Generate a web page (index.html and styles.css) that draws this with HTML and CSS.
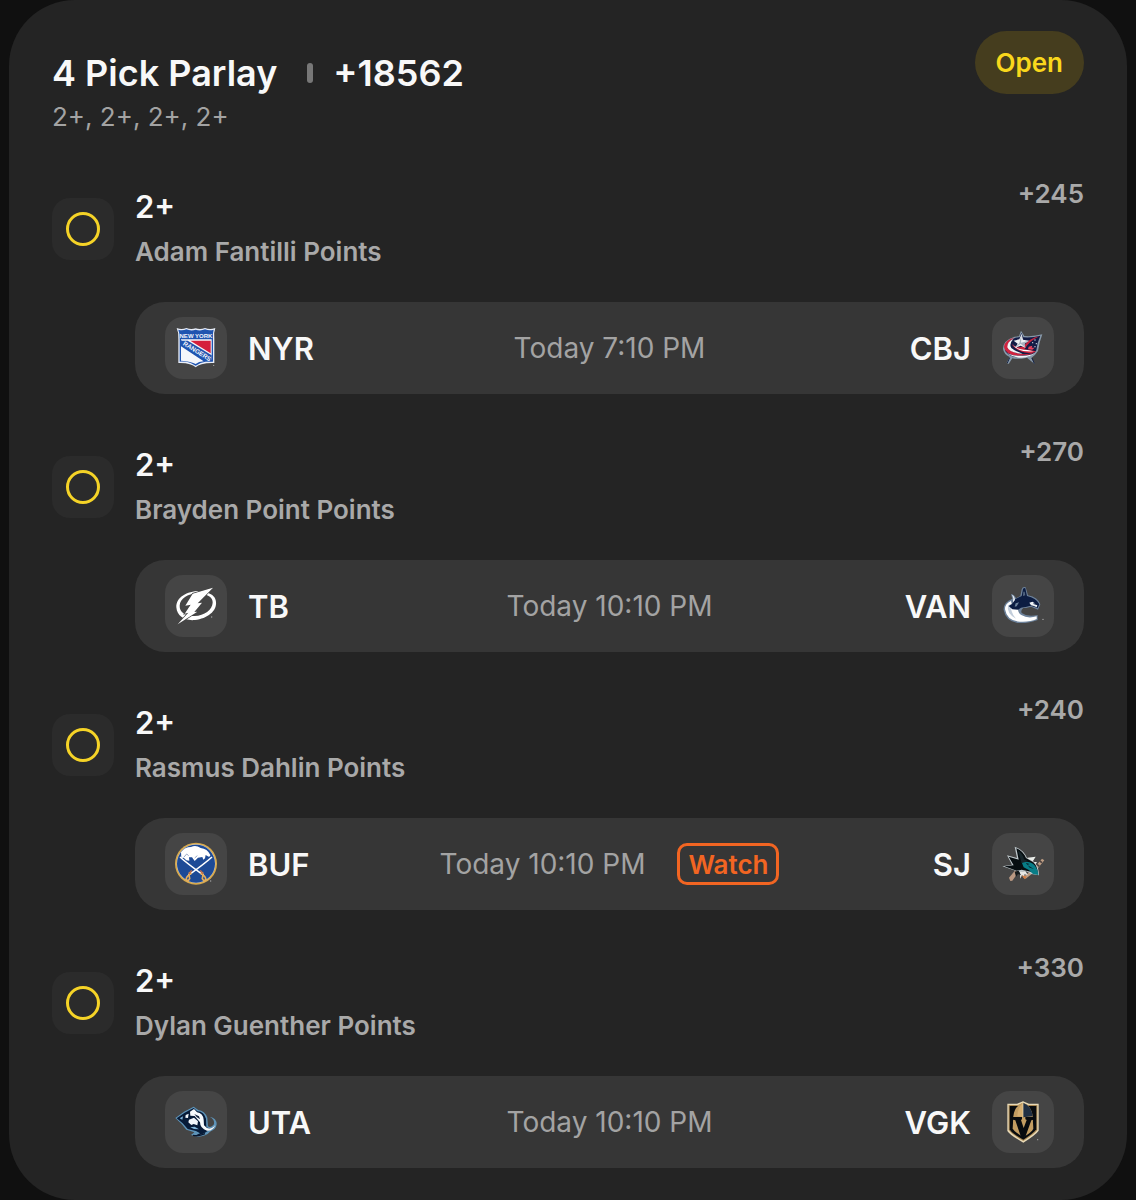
FILE: index.html
```html
<!DOCTYPE html>
<html lang="en">
<head>
    <meta charset="UTF-8">
    <meta name="viewport" content="width=device-width, initial-scale=1.0">
    <title>4 Pick Parlay</title>
    <link rel="stylesheet" href="styles.css">
</head>
<body>
    <main class="card">
        <header class="card-header">
            <div class="summary">
                <h1><span>4 Pick Parlay</span><span class="divider"></span><span>+18562</span></h1>
                <p>2+, 2+, 2+, 2+</p>
            </div>
            <span class="badge">Open</span>
        </header>

        <div class="legs">
            <section class="leg">
                <div class="status"><span class="ring"></span></div>
                <div class="pick">
                    <h2>2+</h2>
                    <p>Adam Fantilli Points</p>
                </div>
                <span class="odds">+245</span>
                <div class="game">
                    <div class="team">
                        <!-- Rangers shield -->
                        <svg class="logo" viewBox="16 16 186 186" aria-hidden="true">
                            <path d="M51 49 Q66 55 80 49 Q94 55 108 50 Q122 55 136 49 Q151 55 167 49 Q161 64 164 83 V154 Q142 153 126 158 Q114 161 108 167 Q102 161 90 158 Q77 153 56 154 V83 Q58 64 51 49Z" fill="#e9eef8"/>
                            <path d="M56 54 Q68 58 80 53 Q94 59 108 54 Q122 59 136 53 Q150 58 162 54 Q158 67 160 83 V150 Q139 149 123 154 L108 162 L93 154 Q79 149 60 150 V83 Q61 67 56 54Z" fill="#1f54b0"/>
                            <path d="M64 83 H156 V145 L64 86Z" fill="#f4f6fa"/>
                            <path d="M92 87 H153 V125Z" fill="#d51f3b"/>
                            <path d="M64 104 L132 149 Q117 150 108 157 Q96 149 64 147Z" fill="#f4f6fa"/>
                            <path d="M64 87 H84 L156 131 V150 L140 148 L64 101Z" fill="#1f54b0"/>
                            <text class="shield-text" x="109" y="80" font-size="18" text-anchor="middle">NEW YORK</text>
                            <text class="shield-text" x="112" y="125" font-size="19" text-anchor="middle" transform="rotate(32 112 119)">RANGERS</text>
                            <circle cx="162" cy="161" r="2" fill="#aaa"/>
                        </svg>
                        <span>NYR</span>
                    </div>
                    <div class="time">Today 7:10 PM</div>
                    <div class="team away">
                        <!-- Blue Jackets star and flag -->
                        <svg class="logo" viewBox="16 16 186 186" aria-hidden="true">
                            <path d="M103 57 L113 73 Q142 75 167 68 Q158 91 154 118 Q145 132 134 139 L145 158 L130 146 L121 138 Q93 144 77 140 L66 157 L60 153 L69 136 Q51 127 49 111 Q49 86 84 75 L97 74Z" fill="#8799aa"/>
                            <path d="M104 63 L110 77 Q138 79 161 72 Q152 91 149 116 Q138 136 112 136 Q73 141 57 120 Q47 96 79 82 Q88 76 99 77Z" fill="#121b45"/>
                            <path d="M158 74 Q128 80 111 103 Q91 113 74 98 Q86 115 113 113 Q128 88 158 74Z" fill="#c8253f"/>
                            <path d="M84 78 Q54 84 52 106 Q55 129 92 132 Q122 132 143 124 Q111 131 88 124 Q61 115 64 98 Q67 87 84 78Z" fill="#d02440"/>
                            <path d="M80 82 Q61 90 62 107 Q68 124 108 126 Q84 118 74 109 Q66 97 80 82Z" fill="#f3f4f6"/>
                            <path d="M54 116 Q66 134 103 132 Q129 133 144 124 Q131 137 106 138 Q69 138 54 116Z" fill="#f3f4f6"/>
                            <path d="M75 92 Q80 112 123 114 L148 119 Q142 126 126 124 Q83 120 75 92Z" fill="#d02440"/>
                            <path d="M78 97 Q89 114 122 115 L142 119 Q124 120 110 118 Q87 114 78 97Z" fill="#fff"/>
                            <path d="M105 66 L109 84 L127 87 L113 96 L116 108 L102 102 L85 109 L93 96 L81 87 L98 83Z" fill="#eef0f3"/>
                            <path d="M105 66 L103 93 L127 87 L113 96 L116 108 L102 96 L85 109 L98 94Z" fill="#aab4c0"/>
                            <path d="M126 105 L137 102 L135 108 L144 108 L137 114 L124 113Z" fill="#e6415a"/>
                            <g fill="#d8dce5"><circle cx="145" cy="85" r="2"/><circle cx="138" cy="93" r="2"/><circle cx="149" cy="96" r="2"/><circle cx="145" cy="105" r="2"/></g>
                            <path d="M69 138 L62 154 M136 139 L143 156" stroke="#172344" stroke-width="3"/>
                        </svg>
                        <span>CBJ</span>
                    </div>
                </div>
            </section>

            <section class="leg">
                <div class="status"><span class="ring"></span></div>
                <div class="pick">
                    <h2>2+</h2>
                    <p>Brayden Point Points</p>
                </div>
                <span class="odds">+270</span>
                <div class="game">
                    <div class="team">
                        <!-- Lightning bolt -->
                        <svg class="logo" viewBox="16 16 186 186" aria-hidden="true">
                            <path fill-rule="evenodd" d="M119 64 C82 64 49 83 50 113 C52 141 77 154 106 151 C143 147 172 124 169 97 C168 82 158 74 144 69 L139 75 C153 80 159 87 159 99 C158 120 134 138 105 139 C78 140 59 127 60 108 C61 87 85 73 111 71Z" fill="#fff"/>
                            <path d="M160 54 L99 72 L77 108 L93 105 L75 132 L86 129 L54 164 L113 126 L104 127 L127 99 L114 101Z" fill="#fff" stroke="#454545" stroke-width="4"/>
                            <path d="M160 54 L99 72 L77 108 L93 105 L75 132 L86 129 L54 164 L113 126 L104 127 L127 99 L114 101Z" fill="#fff"/>
                            <circle cx="156" cy="142" r="2" fill="#aaa"/>
                        </svg>
                        <span>TB</span>
                    </div>
                    <div class="time">Today 10:10 PM</div>
                    <div class="team away">
                        <!-- Canucks orca -->
                        <svg class="logo" viewBox="16 16 186 186" aria-hidden="true">
                            <path d="M101 79 L105 59 Q108 50 117 53 L124 77 Q154 83 161 104 L154 120 L133 111 L118 115 L111 114 Q101 121 105 130 Q123 143 153 136 V151 Q126 162 92 160 Q57 154 51 121 Q49 98 77 87 L73 73 Q84 75 88 86Z" fill="#6d829b"/>
                            <path d="M73 94 Q55 101 55 119 Q61 154 99 156 Q129 158 150 148 V140 Q123 148 104 136 Q91 128 95 111 L83 116 L75 103Z" fill="#fff"/>
                            <path d="M64 107 Q59 132 88 147 Q69 126 74 103Z" fill="#c3cedb"/>
                            <path d="M105 79 L109 58 Q112 54 116 56 L121 79 Q148 84 158 104 L153 115 L132 108 L117 112 Q103 111 94 120 L77 119 L66 109 L77 102 L79 92 L91 86Z" fill="#0c1d42"/>
                            <path d="M76 75 Q84 79 85 91 L78 100 L80 86Z" fill="#e8edf2"/>
                            <path d="M110 66 H114 L116 77 L109 79Z" fill="#536781"/>
                            <path d="M137 96 L145 101 L138 102 L152 107 L150 113 Q142 109 133 107 L128 99Z" fill="#eef2f5"/>
                            <path d="M87 101 L97 98 L90 110 L84 111Z" fill="#6d839c"/>
                            <circle cx="169" cy="149" r="2" fill="#bbb"/>
                        </svg>
                        <span>VAN</span>
                    </div>
                </div>
            </section>

            <section class="leg">
                <div class="status"><span class="ring"></span></div>
                <div class="pick">
                    <h2>2+</h2>
                    <p>Rasmus Dahlin Points</p>
                </div>
                <span class="odds">+240</span>
                <div class="game">
                    <div class="team">
                        <!-- Sabres crest -->
                        <svg class="logo" viewBox="16 16 186 186" aria-hidden="true">
                            <circle cx="109" cy="108" r="63" fill="#d8aa4e"/>
                            <circle cx="109" cy="108" r="58" fill="#c9cdd2"/>
                            <circle cx="109" cy="108" r="57" fill="#1d4a96"/>
                            <path d="M64 74 Q75 58 94 58 Q108 50 123 61 Q143 63 152 82 Q153 87 147 87 L138 82 L136 92 L131 96 L128 88 L115 90 L105 100 L97 89 L88 89 L89 99 L80 98 L72 90 L65 91Z" fill="#fff"/>
                            <path d="M73 88 L81 79 L87 84 M105 91 L113 84" fill="none" stroke="#98a9c7" stroke-width="3"/>
                            <path d="M61 88 Q82 107 132 143 M157 88 Q136 107 86 143" fill="none" stroke="#fff" stroke-width="5"/>
                            <path d="M90 133 Q86 143 90 153 L85 160 L79 155 Q82 143 96 137 M128 133 Q132 143 128 153 L133 160 L139 155 Q136 143 122 137" fill="none" stroke="#e3ad5b" stroke-width="5"/>
                            <path d="M96 128 L88 139 M122 128 L130 139" stroke="#c86e48" stroke-width="4"/>
                            <circle cx="153" cy="160" r="2" fill="#aaa"/>
                        </svg>
                        <span>BUF</span>
                    </div>
                    <div class="time">Today 10:10 PM <button type="button" class="watch">Watch</button></div>
                    <div class="team away">
                        <!-- Sharks head and stick -->
                        <svg class="logo" viewBox="16 16 186 186" aria-hidden="true">
                            <path d="M166 93 L173 98 L147 130 L117 153 L110 148 L140 123Z" fill="#bb9c83"/>
                            <path d="M159 100 L166 105 M151 110 L158 116" stroke="#4b4140" stroke-width="5"/>
                            <path d="M67 150 L87 126 L98 130 L77 159 L71 160Z" fill="#ba9983"/>
                            <path d="M122 90 L147 87 L137 103 L151 103 L143 115 L154 122 L139 127 L119 108Z" fill="#e9ece8"/>
                            <path d="M47 116 L76 111 L61 83 L91 91 L84 57 Q111 66 121 91 L142 102 Q157 117 157 143 L134 139 L117 130 L99 134 L80 127Z" fill="#bdc6ca"/>
                            <path d="M53 116 L81 113 L66 87 L96 96 L89 62 Q109 70 118 91 L140 104 Q153 117 154 139 L132 132 L105 126 L90 129Z" fill="#070e11"/>
                            <path d="M105 104 Q128 99 143 112 Q154 125 155 142 L139 139 Q129 126 111 119Z" fill="#087d87"/>
                            <path d="M94 69 Q109 78 112 95 L125 101 L105 106Z" fill="#17262b"/>
                            <path d="M117 105 L129 109 L122 112 L142 124 L129 120Z" fill="#0a2830"/>
                            <path d="M99 133 L116 130 L124 143 L113 140 L114 153 L106 142 L101 153Z" fill="#e7e8e5"/>
                            <path d="M105 143 L120 147 L114 155Z" fill="#d77b3e"/>
                            <path d="M84 132 L96 129 L103 143 L94 139 L88 147Z" fill="#13191b"/>
                        </svg>
                        <span>SJ</span>
                    </div>
                </div>
            </section>

            <section class="leg">
                <div class="status"><span class="ring"></span></div>
                <div class="pick">
                    <h2>2+</h2>
                    <p>Dylan Guenther Points</p>
                </div>
                <span class="odds">+330</span>
                <div class="game">
                    <div class="team">
                        <!-- Mammoth head -->
                        <svg class="logo" viewBox="16 16 186 186" aria-hidden="true">
                            <path d="M47 97 L73 78 L102 63 L116 73 Q135 75 143 96 L145 122 Q154 128 163 116 Q166 101 150 93 Q171 97 171 116 Q169 132 151 138 Q140 152 114 153 L94 148 L104 140 L80 132 L66 115Z" fill="#5d93b8"/>
                            <path d="M51 98 L75 81 L102 67 L113 77 Q133 78 139 99 L140 124 Q153 134 165 120 Q160 134 145 135 Q130 147 109 149 L121 143 L109 136 L84 130 L69 113Z" fill="#071b38"/>
                            <path d="M91 78 L103 70 L112 80 Q130 83 132 102 L133 119 Q148 138 167 119 Q158 138 142 135 Q121 128 121 110 L112 99 L105 91 L92 90Z" fill="#f7fbfd"/>
                            <path d="M78 88 L87 84 L85 97 L77 96Z M88 102 L103 96 L115 107 L113 119 L102 115 L95 118 L86 110Z" fill="#f2f7fb"/>
                            <path d="M104 85 L118 92 L121 101 L111 94Z" fill="#12223d"/>
                            <path d="M60 98 L70 92 L68 102Z M92 125 L105 123 L118 131 L103 130Z" fill="#7fb5da"/>
                            <path d="M100 149 Q118 153 136 144" fill="none" stroke="#09162d" stroke-width="4"/>
                        </svg>
                        <span>UTA</span>
                    </div>
                    <div class="time">Today 10:10 PM</div>
                    <div class="team away">
                        <!-- Golden Knights helmet shield -->
                        <svg class="logo" viewBox="16 16 186 186" aria-hidden="true">
                            <path d="M62 54 H91 L109 47 L127 54 H156 V135 Q148 147 110 171 Q70 149 62 136Z" fill="#e8d9b6"/>
                            <path d="M66 58 H94 L109 51 L124 58 H152 V133 Q144 144 110 166 Q74 145 66 133Z" fill="#a98854"/>
                            <path d="M69 61 H149 V131 Q142 142 110 162 Q76 144 69 131Z" fill="#080b0e"/>
                            <path d="M109 51 Q83 61 80 92 L78 129 Q84 140 110 154 Q135 140 140 129 L138 92 Q135 61 109 51Z" fill="#c39d62"/>
                            <path d="M109 51 V95 L138 92 Q135 61 109 51Z" fill="#202f43"/>
                            <path d="M109 53 Q94 63 92 91 L109 94Z" fill="#d5ae70"/>
                            <path d="M79 94 H106 V101 L103 103 L111 127 L120 103 L116 101 V94 H140 V102 L134 104 L117 151 L109 157 L102 151 L86 104 L79 102Z" fill="#080b0e"/>
                            <path d="M109 48 V94" stroke="#eadbb7" stroke-width="2"/>
                            <circle cx="153" cy="162" r="2" fill="#aaa"/>
                        </svg>
                        <span>VGK</span>
                    </div>
                </div>
            </section>
        </div>
    </main>
</body>
</html>
```
FILE: styles.css
```css
* {
    box-sizing: border-box;
}

body {
    margin: 0;
    font-family: "Inter", "Liberation Sans", sans-serif;
    background: #101010;
    color: #f8f8f8;
}

h1, h2, p {
    margin: 0;
}

.card {
    margin: 0 9px;
    padding: 31px 43px 32px;
    background: #242424;
    border-radius: 66px;
}

.card-header {
    display: flex;
    justify-content: space-between;
    align-items: flex-start;
    margin-bottom: 45px;
}

.summary {
    padding-top: 20px;
}

.summary h1 {
    display: flex;
    align-items: center;
    font-size: 36px;
    font-weight: 600;
    line-height: 44px;
}

.summary p {
    font-size: 26px;
    line-height: 44px;
    color: #a3a3a3;
}

.divider {
    width: 6px;
    height: 20px;
    margin: 0 20px 0 30px;
    border-radius: 3px;
    background: #777;
}

.badge {
    padding: 0 21px;
    border-radius: 32px;
    background: #453d1e;
    color: #f9d71c;
    font-size: 26px;
    font-weight: 600;
    line-height: 63px;
}

.legs {
    display: grid;
    gap: 48px;
}

.leg {
    display: grid;
    grid-template-columns: 62px 1fr auto;
    column-gap: 21px;
    row-gap: 28px;
}

.status {
    display: grid;
    place-items: center;
    align-self: center;
    height: 62px;
    border-radius: 18px;
    background: #2b2b2b;
}

.ring {
    width: 34px;
    height: 34px;
    border: 3px solid #f5d327;
    border-radius: 50%;
}

.pick h2 {
    font-size: 31px;
    font-weight: 600;
    line-height: 45px;
}

.pick p {
    font-size: 26px;
    font-weight: 600;
    line-height: 45px;
    color: #a9a9a9;
}

.odds {
    font-size: 26px;
    font-weight: 600;
    line-height: 20px;
    color: #a9a9a9;
}

.game {
    grid-column: 2 / -1;
    display: grid;
    grid-template-columns: 1fr auto 1fr;
    align-items: center;
    padding: 15px 30px;
    border-radius: 30px;
    background: #363636;
}

.team {
    display: flex;
    align-items: center;
    gap: 21px;
    font-size: 31px;
    font-weight: 600;
}

.away {
    flex-direction: row-reverse;
}

.logo {
    width: 62px;
    height: 62px;
    border-radius: 18px;
    background: #454545;
}

.shield-text {
    font-family: "Liberation Sans", sans-serif;
    font-weight: 700;
    fill: #f4f6fa;
}

.time {
    display: flex;
    align-items: center;
    gap: 32px;
    font-size: 28px;
    color: #a3a3a3;
}

.watch {
    height: 42px;
    padding: 0 8px;
    border: 3px solid #f26522;
    border-radius: 10px;
    background: none;
    color: #f26522;
    font-family: inherit;
    font-size: 26px;
    font-weight: 600;
}
```
